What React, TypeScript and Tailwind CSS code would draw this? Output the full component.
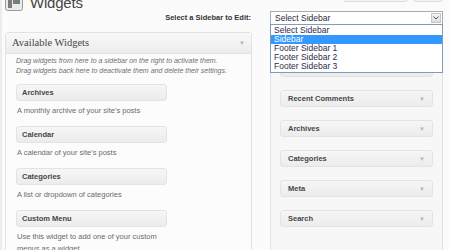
import React from "react";

const sans = { fontFamily: '"Liberation Sans", Arial, sans-serif' };

function Arrow() {
  return <span className="text-[6px] leading-none text-[#b5b5b5]">▼</span>;
}

function LeftWidget({ title, desc }: { title: string; desc: React.ReactNode }) {
  return (
    <div className="flex flex-col">
      <div className="h-[17px] w-[151px] rounded-[3px] border border-[#e3e3e3] bg-gradient-to-b from-[#f6f6f6] to-[#ececec] pl-[5px] flex items-center text-[7.5px] font-bold text-[#464646]">
        {title}
      </div>
      <div className="pl-[1px] pt-[4px] text-[7.5px] leading-[12px] text-[#6b6b6b]">{desc}</div>
    </div>
  );
}

function RightWidget({ title }: { title: string }) {
  return (
    <div className="h-[17px] rounded-[3px] border border-[#e3e3e3] bg-gradient-to-b from-[#f6f6f6] to-[#ececec] pl-[7px] pr-[7px] flex items-center justify-between text-[7.5px] font-bold text-[#464646]">
      <span>{title}</span>
      <Arrow />
    </div>
  );
}

export default function App() {
  return (
    <div className="relative w-[450px] h-[250px] overflow-hidden bg-[#fbfbfb]" style={sans}>
      <div className="absolute left-0 top-0 h-full w-[2px] bg-[#ececec]" />
      {/* header */}
      <div className="flex h-[11px] items-end">
        <div className="ml-[5px] -mt-[6px] flex h-[18px] w-[18px] items-center justify-center">
          <svg width="18" height="18" viewBox="0 0 18 18">
            <rect x="0.5" y="0.5" width="17" height="17" rx="2" fill="#eaeaea" stroke="#9a9a9a" />
            <rect x="3" y="7" width="4" height="8" fill="#7b7b7b" />
            <rect x="8" y="7" width="7" height="4" fill="#7b7b7b" />
            <rect x="3" y="3" width="12" height="2" fill="#7b7b7b" />
          </svg>
        </div>
        <div className="ml-[7px] text-[15px] leading-none text-[#464646] mb-[1px] tracking-[-0.2px]">
          Widgets
        </div>
        <div className="flex-1" />
        <div className="self-start -mt-[10px] mr-[5px] h-[12px] w-[65px] rounded-[3px] border border-[#dcdcdc] bg-[#f4f4f4]" />
        <div className="self-start -mt-[10px] mr-[7px] h-[12px] w-[30px] rounded-[3px] border border-[#dcdcdc] bg-[#f4f4f4]" />
      </div>

      {/* select row */}
      <div className="flex h-[14px] items-center">
        <div className="flex-1 text-right pr-[19px] text-[7.5px] font-bold text-[#333]">Select a Sidebar to Edit:</div>
        <div className="relative mr-[7px] h-[14px] w-[173px] border border-[#a5acb5] bg-white flex items-center">
          <span className="pl-[4px] text-[8.5px] text-[#2b2b3b]">Select Sidebar</span>
          <div className="absolute right-[1px] top-[1px] h-[10px] w-[10px] border border-[#c5c5c5] bg-gradient-to-b from-[#f4f4f4] to-[#dedede] flex items-center justify-center">
            <svg width="6" height="4" viewBox="0 0 6 4"><path d="M0.5 0.5 L3 3 L5.5 0.5" stroke="#555" fill="none" strokeWidth="1" /></svg>
          </div>
        </div>
      </div>

      {/* dropdown list (overlay) */}
      <div className="absolute left-[270px] top-[24px] z-10 w-[173px] border border-[#7f9db9] bg-white py-[1px] text-[8.5px] leading-[9px] text-[#2e2a4a]">
        <div className="pl-[3px]">Select Sidebar</div>
        <div className="pl-[3px] bg-[#3399ff] text-white">Sidebar</div>
        <div className="pl-[3px]">Footer Sidebar 1</div>
        <div className="pl-[3px]">Footer Sidebar 2</div>
        <div className="pl-[3px]">Footer Sidebar 3</div>
      </div>

      {/* main columns */}
      <div className="mt-[7px] flex">
        <div className="ml-[5px] w-[247px] rounded-t-[3px] border border-[#e2e2e2] bg-[#fcfcfc] h-[240px]">
          <div className="flex h-[21px] items-center justify-between border-b border-[#e2e2e2] bg-gradient-to-b from-[#f9f9f9] to-[#ececec] pl-[6px] pr-[6px]">
            <span className="text-[10.5px] text-[#464646]" style={{ fontFamily: '"Liberation Serif", "Times New Roman", serif' }}>
              Available Widgets
            </span>
            <Arrow />
          </div>
          <div className="pl-[10px] pt-[2px] text-[7px] italic leading-[10px] text-[#707070]">
            <div>Drag widgets from here to a sidebar on the right to activate them.</div>
            <div>Drag widgets back here to deactivate them and delete their settings.</div>
          </div>
          <div className="mt-[8px] flex flex-col gap-[9px] pl-[10px]">
            <LeftWidget title="Archives" desc="A monthly archive of your site's posts" />
            <LeftWidget title="Calendar" desc="A calendar of your site's posts" />
            <LeftWidget title="Categories" desc="A list or dropdown of categories" />
            <LeftWidget
              title="Custom Menu"
              desc={
                <>
                  Use this widget to add one of your custom
                  <br />
                  menus as a widget.
                </>
              }
            />
          </div>
        </div>
        <div className="ml-[18px] w-[173px] border border-[#e2e2e2] bg-[#f7f7f7] h-[240px]">
          <div className="flex h-[21px] items-center border-b border-[#e2e2e2] bg-gradient-to-b from-[#f9f9f9] to-[#ececec] pl-[6px]">
            <span className="text-[10.5px] text-[#464646]" style={{ fontFamily: '"Liberation Serif", "Times New Roman", serif' }}>Sidebar</span>
          </div>
          <div className="mt-[6px] flex flex-col gap-[13px] px-[9px]">
            <RightWidget title="Recent Posts" />
            <RightWidget title="Recent Comments" />
            <RightWidget title="Archives" />
            <RightWidget title="Categories" />
            <RightWidget title="Meta" />
            <RightWidget title="Search" />
          </div>
        </div>
      </div>
    </div>
  );
}
